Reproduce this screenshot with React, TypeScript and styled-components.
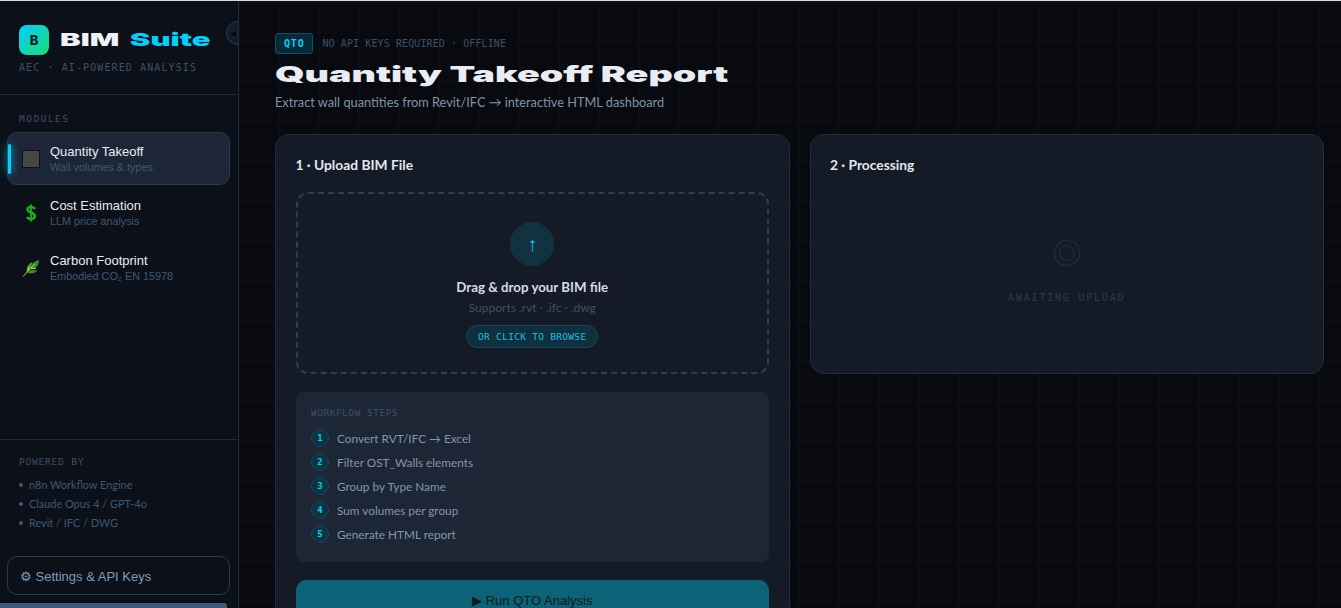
import { createGlobalStyle, styled } from 'styled-components';

const mono = `"DejaVu Sans Mono", "Liberation Mono", monospace`;
const body = `"Lato", "Noto Sans", sans-serif`;
const arial = `"Liberation Sans", Arial, sans-serif`;
const display = `"Inter", "Liberation Sans", sans-serif`;

const GlobalStyle = createGlobalStyle`
  html, body {
    margin: 0;
    height: 100%;
    overflow: hidden;
    background: #080a10;
  }
  * { box-sizing: border-box; }
  #root { height: 100%; }
`;

const Shell = styled.div`
  display: flex;
  height: 100vh;
  border-top: 1px solid #d8dadd;
  font-family: ${body};
`;

const Sidebar = styled.aside`
  position: relative;
  flex: 0 0 239px;
  display: flex;
  flex-direction: column;
  background: #0c1018;
  border-right: 1px solid #1e2a3a;
  overflow: hidden;
`;

const Collapse = styled.div`
  position: absolute;
  top: 20px;
  right: -12px;
  width: 24px;
  height: 24px;
  border-radius: 50%;
  background: #161d2a;
  border: 1px solid #2a3a50;
  display: flex;
  align-items: center;
  padding-left: 3px;
  font-size: 8px;
  color: #05070b;
`;

const Brand = styled.div`
  height: 94px;
  padding: 24px 19px 0;
  border-bottom: 1px solid #1e2a3a;
`;

const BrandRow = styled.div`
  display: flex;
  align-items: center;
  gap: 11px;
`;

const LogoMark = styled.div`
  width: 30px;
  height: 30px;
  border-radius: 8px;
  background: linear-gradient(135deg, #00cfff, #1fdc76);
  color: #07211f;
  font: 800 13px ${display};
  display: flex;
  align-items: center;
  justify-content: center;
`;

const BrandName = styled.div`
  font: 900 18px/30px ${display};
  word-spacing: 2.5px;
  color: #eef1f6;
  white-space: nowrap;
  transform: scaleX(1.72);
  transform-origin: left center;

  span { color: #00cfff; }
`;

const Tagline = styled.div`
  margin-top: 7px;
  font: 10px/12px ${mono};
  letter-spacing: 1.1px;
  color: #3d5068;
  white-space: nowrap;
`;

const Nav = styled.nav`
  flex: 1;
  padding: 18px 8px 0 7px;
`;

const SectionLabel = styled.div`
  padding-left: 12px;
  margin-bottom: 7px;
  font: 9.5px/12px ${mono};
  letter-spacing: 1.5px;
  color: #3d5068;
`;

const NavItem = styled.div<{ $active?: boolean }>`
  position: relative;
  height: 53px;
  margin-bottom: 1.5px;
  padding-left: 14px;
  display: flex;
  align-items: center;
  gap: 10px;
  border-radius: 10px;
  border: 1px solid ${p => (p.$active ? '#2a3a50' : 'transparent')};
  background: ${p => (p.$active ? '#1c2636' : 'transparent')};

  ${p =>
    p.$active &&
    `&::before {
      content: '';
      position: absolute;
      left: 0;
      top: 11px;
      width: 3px;
      height: 30px;
      border-radius: 2px;
      background: #00cfff;
      box-shadow: 0 0 8px #00cfff;
    }`}
`;

const NavIcon = styled.div`
  flex: 0 0 18px;
  height: 18px;
  display: flex;
  align-items: center;
  justify-content: center;
`;

const SquareIcon = styled.div`
  width: 18px;
  height: 18px;
  background: #474747;
  border: 1px solid #111;
`;

const NavText = styled.div`
  display: flex;
  flex-direction: column;
`;

const NavLabel = styled.div`
  font: 13px/16px ${arial};
  color: #e8ecf2;
`;

const NavSub = styled.div`
  font: 10.8px/14px ${arial};
  color: #3f5874;
`;

const Powered = styled.div`
  border-top: 1px solid #1e2a3a;
  padding: 16px 19px 0;
  height: 117px;
`;

const PoweredTitle = styled.div`
  font: 9.5px/12px ${mono};
  letter-spacing: 0.8px;
  color: #3d5068;
  margin-bottom: 7px;
`;

const PoweredItem = styled.div`
  display: flex;
  align-items: center;
  gap: 6px;
  font: 10.9px/19px ${body};
  color: #3f5874;

  &::before {
    content: '';
    width: 4px;
    height: 4px;
    border-radius: 50%;
    background: #3f5874;
  }
`;

const SettingsButton = styled.div`
  height: 39px;
  margin: 0 8px 13px 7px;
  padding: 1px 0 0 12px;
  display: flex;
  align-items: center;
  border: 1px solid #2a3a50;
  border-radius: 10px;
  font: 13px/1 ${arial};
  color: #7d9cba;
  white-space: nowrap;
`;

const ScrollThumb = styled.div`
  position: absolute;
  left: 0;
  bottom: 0;
  width: 227px;
  height: 5px;
  border-radius: 0 3px 0 0;
  background: #3f5a78;
`;

const Main = styled.main`
  flex: 1;
  min-width: 0;
  overflow: hidden;
  padding: 32px 17px 0 36px;
  background-color: #080a10;
  background-image:
    linear-gradient(#0c1017 1px, transparent 1px),
    linear-gradient(90deg, #0c1017 1px, transparent 1px);
  background-size: 40px 40px;
`;

const MetaRow = styled.div`
  display: flex;
  align-items: center;
  gap: 9px;
`;

const Badge = styled.div`
  height: 21px;
  padding: 0 8px;
  display: flex;
  align-items: center;
  border: 1px solid #0a5166;
  border-radius: 3px;
  background: #072a38;
  font: 700 10px ${mono};
  letter-spacing: 0.8px;
  color: #00cfff;
`;

const Meta = styled.div`
  font: 10px ${mono};
  letter-spacing: 0.1px;
  color: #3d5068;
`;

const Title = styled.h1`
  margin: 6px 0 0;
  font: 900 22px/28px ${display};
  color: #e9edf3;
  white-space: nowrap;
  transform: scaleX(1.71);
  transform-origin: left center;
`;

const Subtitle = styled.p`
  margin: 5px 0 0;
  font: 12.75px/18px ${body};
  color: #7f93a9;
`;

const Columns = styled.div`
  margin-top: 23px;
  display: grid;
  grid-template-columns: 1fr 1fr;
  gap: 20px;
  align-items: start;
`;

const Card = styled.section<{ $tall?: boolean }>`
  border: 1px solid #222e3e;
  border-radius: 14px;
  background: #141b26;
  padding: 20px;
  height: ${p => (p.$tall ? '600px' : '240px')};
`;

const CardTitle = styled.h2`
  margin: 0 0 17px -0.5px;
  font: 700 13.8px/20px ${body};
  color: #e3e8ef;
`;

const Dropzone = styled.div`
  height: 182px;
  border: 2px dashed #2e3e52;
  border-radius: 12px;
  display: flex;
  flex-direction: column;
  align-items: center;
  padding-top: 28px;
`;

const UploadCircle = styled.div`
  width: 44px;
  height: 44px;
  border-radius: 50%;
  background: #10333f;
  color: #19bfe6;
  font: 700 20px/44px "Noto Sans", sans-serif;
  text-align: center;
`;

const DropTitle = styled.div`
  margin-top: 12px;
  font: 700 13.3px/18px ${body};
  color: #d6dce5;
`;

const DropSub = styled.div`
  margin-top: 3px;
  font: 12px/18px ${body};
  color: #3f5068;
`;

const BrowsePill = styled.div`
  margin-top: 8px;
  height: 23px;
  padding: 0 11px;
  display: flex;
  align-items: center;
  border: 1px solid #0f4a5c;
  border-radius: 12px;
  background: #10303d;
  font: 9.5px ${mono};
  letter-spacing: 0.3px;
  color: #19bfe6;
`;

const Steps = styled.div`
  margin-top: 18px;
  height: 170px;
  padding: 15px 15px;
  border-radius: 8px;
  background: #1c2635;
`;

const StepsTitle = styled.div`
  margin-bottom: 7px;
  font: 9.5px/12px ${mono};
  letter-spacing: 0.5px;
  color: #3f5068;
`;

const StepRow = styled.div`
  height: 24px;
  display: flex;
  align-items: center;
  gap: 8px;
  font: 11.8px ${body};
  color: #8296ac;
`;

const StepNumber = styled.div`
  width: 18px;
  height: 18px;
  border-radius: 50%;
  background: #10333f;
  border: 1px solid #0f4a5c;
  display: flex;
  align-items: center;
  justify-content: center;
  font: 700 9px ${mono};
  color: #00cfff;
`;

const RunButton = styled.div`
  margin-top: 18px;
  height: 40px;
  border-radius: 10px 10px 0 0;
  background: #0c6277;
  display: flex;
  align-items: center;
  justify-content: center;
  font: 13px ${arial};
  color: #0b1a22;
`;

const Awaiting = styled.div`
  margin-top: 64px;
  display: flex;
  flex-direction: column;
  align-items: center;
`;

const AwaitingLabel = styled.div`
  margin-top: 25px;
  font: 10px ${mono};
  letter-spacing: 1.8px;
  color: #2c3a4c;
`;

const navItems = [
  { label: 'Quantity Takeoff', sub: 'Wall volumes & types', icon: <SquareIcon />, active: true },
  {
    label: 'Cost Estimation',
    sub: 'LLM price analysis',
    icon: (
      <svg width="10" height="18" viewBox="0 0 10 18" fill="none" stroke="#14b01c" strokeWidth="2.6">
        <path d="M8.8 5 C8 3.4 6.6 3 5 3 C3 3 1.5 3.9 1.5 5.5 C1.5 9 8.8 8 8.8 12 C8.8 14 7.2 15 5 15 C3.2 15 1.9 14.5 1.2 13" />
        <path d="M5 0.5 V17.5" strokeWidth="1.8" />
      </svg>
    )
  },
  {
    label: 'Carbon Footprint',
    sub: 'Embodied CO₂ EN 15978',
    icon: (
      <svg width="18" height="18" viewBox="0 0 18 18">
        <path d="M8 10 C9 5 12 2 17 1 C17 6 14 11 8 10Z" fill="#2f8f2a" />
        <path d="M4.5 13 C4 9 6 5 10 3 C11 7 9 11 4.5 13Z" fill="#3a9a30" />
        <path d="M5 13 C8 10.5 12 10.5 15.5 11.5 C12.5 15 8 15.5 5 13Z" fill="#2f8f2a" />
        <path d="M1 17.5 L13 5 M6 12 L7 7.5 M9 9.5 L14 9.5" stroke="#c4cf4a" strokeWidth="1" fill="none" />
      </svg>
    )
  }
];

const steps = [
  'Convert RVT/IFC → Excel',
  'Filter OST_Walls elements',
  'Group by Type Name',
  'Sum volumes per group',
  'Generate HTML report'
];

export default function App() {
  return (
    <>
      <GlobalStyle />
      <Shell>
        <Sidebar>
          <Collapse>◀</Collapse>
          <Brand>
            <BrandRow>
              <LogoMark>B</LogoMark>
              <BrandName>
                BIM <span>Suite</span>
              </BrandName>
            </BrandRow>
            <Tagline>AEC · AI-POWERED ANALYSIS</Tagline>
          </Brand>
          <Nav>
            <SectionLabel>MODULES</SectionLabel>
            {navItems.map(item => (
              <NavItem key={item.label} $active={item.active}>
                <NavIcon>{item.icon}</NavIcon>
                <NavText>
                  <NavLabel>{item.label}</NavLabel>
                  <NavSub>{item.sub}</NavSub>
                </NavText>
              </NavItem>
            ))}
          </Nav>
          <Powered>
            <PoweredTitle>POWERED BY</PoweredTitle>
            <PoweredItem>n8n Workflow Engine</PoweredItem>
            <PoweredItem>Claude Opus 4 / GPT-4o</PoweredItem>
            <PoweredItem>Revit / IFC / DWG</PoweredItem>
          </Powered>
          <SettingsButton>⚙ Settings &amp; API Keys</SettingsButton>
          <ScrollThumb />
        </Sidebar>
        <Main>
          <MetaRow>
            <Badge>QTO</Badge>
            <Meta>NO API KEYS REQUIRED · OFFLINE</Meta>
          </MetaRow>
          <Title>Quantity Takeoff Report</Title>
          <Subtitle>Extract wall quantities from Revit/IFC → interactive HTML dashboard</Subtitle>
          <Columns>
            <Card $tall>
              <CardTitle>1 · Upload BIM File</CardTitle>
              <Dropzone>
                <UploadCircle>↑</UploadCircle>
                <DropTitle>Drag &amp; drop your BIM file</DropTitle>
                <DropSub>Supports .rvt · .ifc · .dwg</DropSub>
                <BrowsePill>OR CLICK TO BROWSE</BrowsePill>
              </Dropzone>
              <Steps>
                <StepsTitle>WORKFLOW STEPS</StepsTitle>
                {steps.map((step, i) => (
                  <StepRow key={step}>
                    <StepNumber>{i + 1}</StepNumber>
                    {step}
                  </StepRow>
                ))}
              </Steps>
              <RunButton>▶ Run QTO Analysis</RunButton>
            </Card>
            <Card>
              <CardTitle>2 · Processing</CardTitle>
              <Awaiting>
                <svg width="28" height="28" viewBox="0 0 28 28" fill="none" stroke="#1f2937" strokeWidth="1.6">
                  <circle cx="14" cy="14" r="12.5" />
                  <circle cx="14" cy="14" r="7.5" />
                </svg>
                <AwaitingLabel>AWAITING UPLOAD</AwaitingLabel>
              </Awaiting>
            </Card>
          </Columns>
        </Main>
      </Shell>
    </>
  );
}
